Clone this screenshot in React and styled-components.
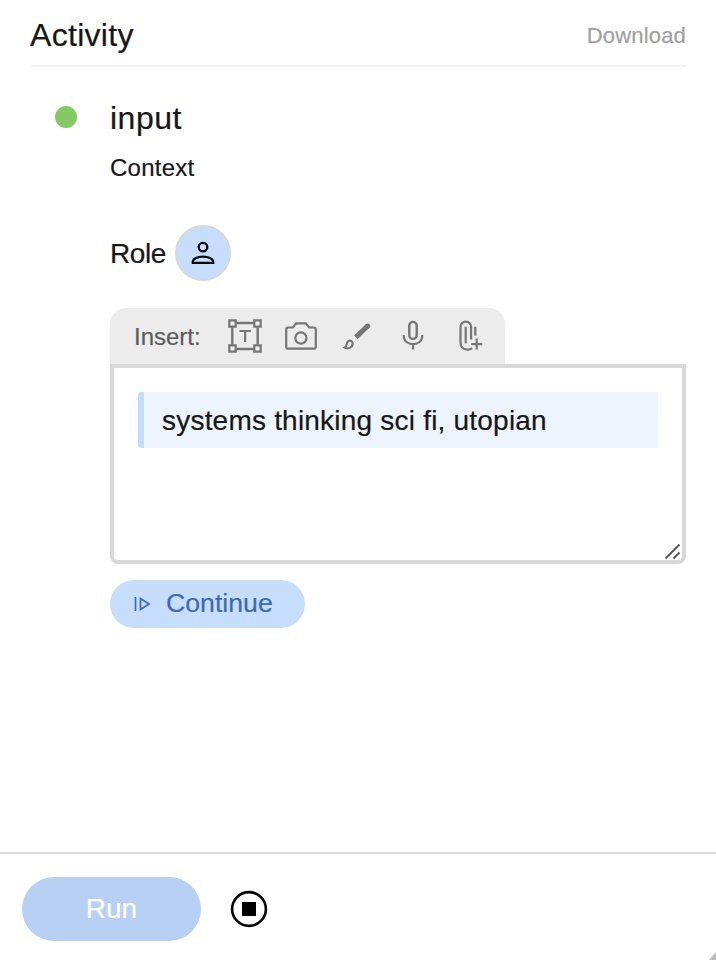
import React from "react";
import styled, { createGlobalStyle } from "styled-components";

const GlobalStyle = createGlobalStyle`
  * { box-sizing: border-box; }
  body {
    margin: 0;
    background: #fff;
    color: #171717;
    font-family: "Liberation Sans", Arial, sans-serif;
    overflow: hidden;
  }
  button { font-family: inherit; border: 0; padding: 0; background: none; }
  svg { display: block; flex: none; }
`;

const Panel = styled.div`
  position: relative;
  display: flex;
  flex-direction: column;
  width: 716px;
  height: 960px;
  background: #fff;
`;

const Header = styled.header`
  display: flex;
  align-items: center;
  justify-content: space-between;
  height: 67px;
  margin: 0 30px;
  padding-top: 5px;
  border-bottom: 2px solid #f3f3f3;
`;

const Label = styled.span`
  padding-top: ${(p) => p.$drop || 0}px;
  font-size: ${(p) => p.$size}px;
  line-height: ${(p) => p.$line || p.$size + 8}px;
  letter-spacing: ${(p) => p.$track || 0}px;
  color: ${(p) => p.$color || "inherit"};
  white-space: nowrap;
  -webkit-text-stroke: ${(p) => p.$stroke || 0.2}px currentColor;
`;

const Body = styled.main`
  display: grid;
  grid-template-columns: 80px 576px;
  flex: 1;
  padding: 31px 30px 0;
`;

const StatusDot = styled.span`
  width: 22px;
  height: 22px;
  margin: 8px 0 0 25px;
  border-radius: 50%;
  background: #85c967;
`;

const Step = styled.section`
  display: flex;
  flex-direction: column;
  align-items: flex-start;
`;

const ContextLine = styled.div`
  display: flex;
  margin-top: 15px;
`;

const RoleRow = styled.div`
  display: flex;
  align-items: center;
  gap: 9px;
  height: 56px;
  margin-top: 42px;
`;

const Avatar = styled.span`
  display: flex;
  align-items: center;
  justify-content: center;
  width: 56px;
  height: 56px;
  border: 2px solid #d8d8d8;
  border-radius: 50%;
  background: #c6ddfc;
`;

const Toolbar = styled.div`
  display: flex;
  align-items: center;
  width: 395px;
  height: 56px;
  margin-top: 27px;
  padding-left: 24px;
  border-radius: 16px 16px 0 0;
  background: #ececec;
  color: #767676;
`;

const ToolButtons = styled.div`
  display: flex;
  gap: 16px;
  margin-left: 24px;
`;

const ToolButton = styled.button`
  width: 40px;
  height: 40px;
  color: inherit;
`;

const Editor = styled.div`
  position: relative;
  width: 576px;
  height: 200px;
  padding: 24px;
  border: 4px solid #d8d8d8;
  border-radius: 0 0 8px 8px;
`;

const Quote = styled.div`
  display: flex;
  align-items: center;
  width: 520px;
  height: 56px;
  padding-left: 18px;
  border-left: 6px solid #c4dcfc;
  border-radius: 4px 0 0 4px;
  background: #edf4fe;
`;

const ResizeGrip = styled.svg`
  position: absolute;
  right: 0;
  bottom: 0;
`;

const ContinueButton = styled.button`
  display: flex;
  align-items: center;
  gap: 15px;
  width: 195px;
  height: 48px;
  margin-top: 16px;
  padding: 0 0 0 24px;
  border-radius: 24px;
  background: #c6ddfc;
  color: #3d6ab3;

  ${Label} {
    margin-bottom: 3px;
  }
`;

const Footer = styled.footer`
  display: flex;
  align-items: center;
  gap: 29px;
  height: 108px;
  padding: 3px 0 0 22px;
  border-top: 2px solid #d8d8d8;
`;

const RunButton = styled.button`
  width: 179px;
  height: 64px;
  border-radius: 32px;
  background: #b8d0f4;
  color: #fff;
`;

const StopButton = styled.button`
  width: 38px;
  height: 38px;
`;

const WindowCorner = styled.svg`
  position: absolute;
  right: 0;
  bottom: 0;
`;

const ToolIcon = ({ children }) => (
  <svg width="40" height="40" viewBox="0 0 40 40" fill="none" stroke="currentColor" strokeWidth="2.2">
    {children}
  </svg>
);

const TextBoxIcon = () => (
  <ToolIcon>
    <path d="M11 7h18M11 33h18M7.3 11v18M32.7 11v18" strokeWidth="2.4" />
    <path d="M4.3 4.3h6.4v6.4H4.3zM29.3 4.3h6.4v6.4h-6.4zM4.3 29.3h6.4v6.4H4.3zM29.3 29.3h6.4v6.4h-6.4z" />
    <path d="M14.5 15h11.3M20.1 15v11" />
  </ToolIcon>
);

const CameraIcon = () => (
  <ToolIcon>
    <path d="M7.2 11.5h4.6l3.4-4.2h9.6l3.4 4.2h4.6q2 0 2 2v17.2q0 2-2 2H7.2q-2 0-2-2V13.5q0-2 2-2Z" />
    <circle cx="19.9" cy="22" r="5.6" />
  </ToolIcon>
);

const BrushIcon = () => (
  <ToolIcon>
    <path d="M18.9 21.3 30.7 9.9" strokeWidth="5" />
    <circle cx="30.7" cy="9.9" r="2.5" fill="currentColor" stroke="none" />
    <path d="M7.9 31.7c2-1.2 1.3-4.8 3.4-6.5 1.9-1.4 4.4-.2 4.4 2.4 0 3.7-4 5.7-7.8 4.1Z" />
  </ToolIcon>
);

const MicIcon = () => (
  <ToolIcon>
    <rect x="16.3" y="5.9" width="7.4" height="17" rx="3.7" strokeWidth="2.4" />
    <path d="M10.8 19v1c0 5 4.1 8.2 9.2 8.2s9.2-3.2 9.2-8.2v-1M20 28.2V33.6" />
  </ToolIcon>
);

const AttachIcon = () => (
  <ToolIcon>
    <path d="M23.2 32.2c-1.5 1.1-3.5 1.7-5.2 1.4-4.2-.6-6.5-3.3-6.5-7.2V10.9a5.3 5.3 0 0 1 10.6 0V23.6M16.7 10.7v16.6" />
    <path d="M26.3 10.7v9M27.7 22.6v11M22.2 28.1h11" />
  </ToolIcon>
);

const PersonIcon = () => (
  <svg width="26" height="26" viewBox="0 0 26 26" fill="none" stroke="#050505" strokeWidth="2.3">
    <circle cx="13" cy="7.1" r="4.3" />
    <path d="M2.8 22.8h20.4v-.8c0-3.4-5.1-5.4-10.2-5.4S2.8 18.6 2.8 22Z" />
  </svg>
);

const StepPlayIcon = () => (
  <svg width="17" height="16" viewBox="0 0 17 16" fill="none" stroke="currentColor" strokeWidth="1.7">
    <path d="M1.5 1v14M6.5 2.5v11L15 8Z" />
  </svg>
);

const tools = [
  ["Text box", TextBoxIcon],
  ["Camera", CameraIcon],
  ["Brush", BrushIcon],
  ["Microphone", MicIcon],
  ["Attachment", AttachIcon],
];

export default function App() {
  return (
    <>
      <GlobalStyle />
      <Panel>
        <Header>
          <Label $size={32} $track={0.3}>Activity</Label>
          <Label $size={22} $track={0.18} $drop={1} $color="#a0a0a0">Download</Label>
        </Header>
        <Body>
          <StatusDot />
          <Step>
            <Label $size={32} $track={0.5}>input</Label>
            <ContextLine>
              <Label $size={24} $line={30} $track={0.25}>Context</Label>
            </ContextLine>
            <RoleRow>
              <Label $size={28} $drop={2} $track={-0.4}>Role</Label>
              <Avatar><PersonIcon /></Avatar>
            </RoleRow>
            <Toolbar>
              <Label $size={24} $drop={2} $color="#5c5c5c">Insert:</Label>
              <ToolButtons>
                {tools.map(([name, Icon]) => (
                  <ToolButton key={name} aria-label={name}><Icon /></ToolButton>
                ))}
              </ToolButtons>
            </Toolbar>
            <Editor>
              <Quote>
                <Label $size={28} $drop={2} $track={0.21}>systems thinking sci fi, utopian</Label>
              </Quote>
              <ResizeGrip width="18" height="18" viewBox="0 0 18 18" fill="none" stroke="#555" strokeWidth="1.8">
                <path d="M1.5 16.5 15.5 2.5M9.5 16.5l6-6" />
              </ResizeGrip>
            </Editor>
            <ContinueButton>
              <StepPlayIcon />
              <Label $size={26.67} $line={34}>Continue</Label>
            </ContinueButton>
          </Step>
        </Body>
        <Footer>
          <RunButton><Label $size={28}>Run</Label></RunButton>
          <StopButton aria-label="Stop">
            <svg width="38" height="38" viewBox="0 0 38 38">
              <circle cx="19" cy="19" r="16.9" fill="none" stroke="#000" strokeWidth="2.6" />
              <rect x="12" y="12" width="14" height="14" fill="#000" />
            </svg>
          </StopButton>
        </Footer>
        <WindowCorner width="7" height="8" viewBox="0 0 7 8">
          <path d="M7 0v8H0Z" fill="#bcbcbc" />
        </WindowCorner>
      </Panel>
    </>
  );
}
